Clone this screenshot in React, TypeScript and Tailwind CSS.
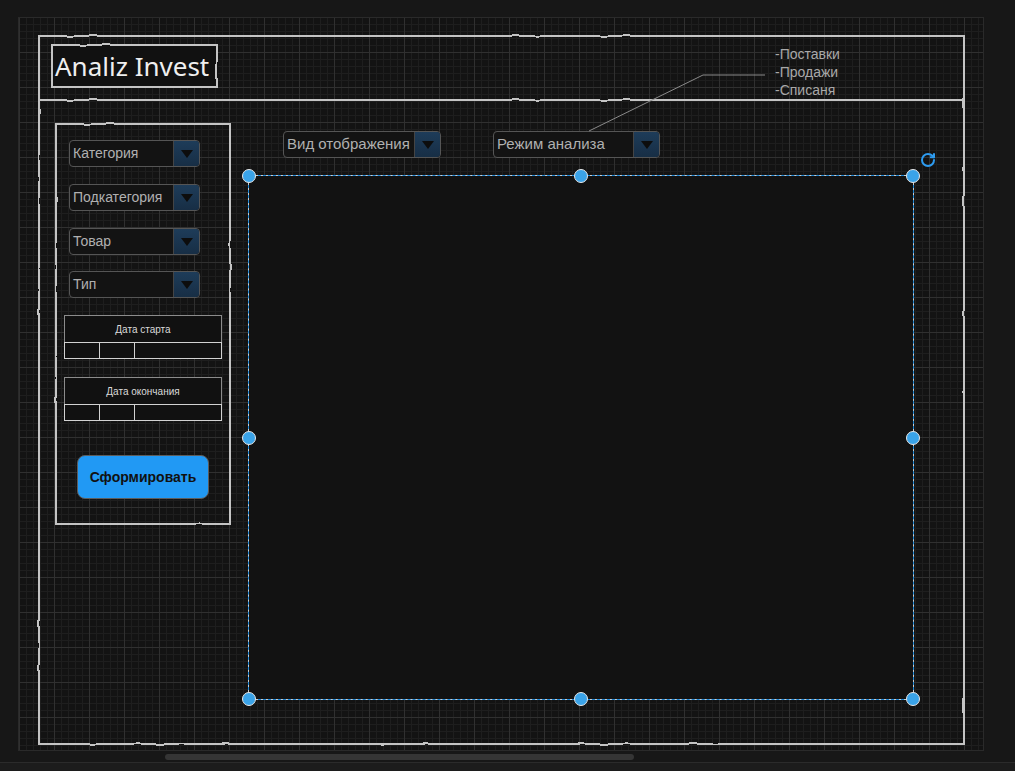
import React from 'react';
import { RotateCw } from 'lucide-react';

const Sketch = ({ className = '' }: { className?: string }) => (
  <div className={`pointer-events-none absolute [filter:url(#rough)] border-[#c4c4c4] ${className}`} />
);

const Select = ({ label, className = '', textSize = 'text-[14px]' }: { label: string; className?: string; textSize?: string }) => (
  <div className={`flex h-[27px] overflow-hidden rounded-[4px] border border-[#555] bg-[#131313] ${className}`}>
    <div className={`flex flex-1 items-center whitespace-nowrap pl-[3px] ${textSize} text-[#b0b0b0]`}>{label}</div>
    <div className="flex w-[26px] items-center justify-center border-l border-[#444] bg-[linear-gradient(#1e3c59,#172e45)]">
      <div className="h-0 w-0 border-x-[6px] border-t-[8px] border-x-transparent border-t-[#0d0d0d]" />
    </div>
  </div>
);

const DateBox = ({ label, className = '' }: { label: string; className?: string }) => (
  <div className={`w-[158px] ${className}`}>
    <div className="flex h-[27px] items-center justify-center border border-b-0 border-[#8c8c8c] bg-[#111] text-[10px] text-[#dadada]">
      {label}
    </div>
    <div className="flex h-[17px] border border-[#d2d2d2] bg-[#111]">
      <div className="w-[35px] border-r border-[#d2d2d2]" />
      <div className="w-[35px] border-r border-[#d2d2d2]" />
      <div className="flex-1" />
    </div>
  </div>
);

const Handle = ({ className }: { className: string }) => (
  <div className={`absolute h-[14px] w-[14px] rounded-full border border-[#e8e8e8] bg-[#3aa3e8] ${className}`} />
);

export default function App() {
  return (
    <div className="flex h-[771px] w-[1015px] flex-col overflow-hidden bg-[#171717] font-['Liberation_Sans',Arial,sans-serif]">
      <svg width="0" height="0" className="absolute">
        <filter id="rough" x="-5%" y="-5%" width="110%" height="110%">
          <feTurbulence type="fractalNoise" baseFrequency="0.045" numOctaves="1" seed="5" />
          <feDisplacementMap in="SourceGraphic" scale="2.5" />
        </filter>
      </svg>

      {/* canvas */}
      <div className="pl-[18px] pt-[17px]">
        <div className="h-[734px] w-[966px] border border-[#2a2a2a] bg-[#131313] bg-[linear-gradient(#303030_1px,transparent_1px),linear-gradient(90deg,#303030_1px,transparent_1px),linear-gradient(#1e1e1e_1px,transparent_1px),linear-gradient(90deg,#1e1e1e_1px,transparent_1px)] pl-[19px] pt-[17px] [background-position:0px_-1px] [background-size:35px_35px,35px_35px,7px_7px,7px_7px]">
          {/* page frame */}
          <div className="relative flex h-[710px] w-[927px] flex-col">
            <Sketch className="inset-0 border-2" />

            {/* header */}
            <div className="relative h-[66px] shrink-0 pl-[13px] pt-[9px]">
              <Sketch className="inset-x-0 bottom-0 h-[2px] border-b-2" />
              <div className="relative flex h-[44px] w-[167px] items-center bg-[#111] pl-[4px] font-['Noto_Sans',sans-serif] text-[26px] text-[#efefef]">
                <Sketch className="inset-0 border-2" />
                Analiz Invest
              </div>
            </div>

            {/* body */}
            <div className="flex pl-[17px] pt-[22px]">
              {/* filters */}
              <div className="relative flex h-[402px] w-[176px] flex-col">
                <Sketch className="inset-0 border-2" />
                <Select label="Категория" className="ml-[14px] mt-[17px] w-[131px]" />
                <Select label="Подкатегория" className="ml-[14px] mt-[17px] w-[131px]" />
                <Select label="Товар" className="ml-[14px] mt-[17px] w-[131px]" />
                <Select label="Тип" className="ml-[14px] mt-[16px] w-[131px]" />
                <DateBox label="Дата старта" className="ml-[9px] mt-[17px]" />
                <DateBox label="Дата окончания" className="ml-[9px] mt-[18px]" />
                <button className="ml-[22px] mt-[34px] flex h-[44px] w-[132px] items-center justify-center rounded-[8px] border border-[#5c5c5c] bg-[#2199f4] text-[14px] font-bold text-[#111]">
                  Сформировать
                </button>
              </div>

              {/* main */}
              <div className="ml-[17px] flex flex-col">
                <div className="mt-[8px] flex pl-[35px]">
                  <Select label="Вид отображения" className="w-[158px]" textSize="text-[15px]" />
                  <Select label="Режим анализа" className="ml-[52px] w-[167px]" textSize="text-[15px]" />
                </div>
                <div className="relative mt-[17px] h-[525px] w-[666px] border border-[#cfcfcf] bg-[#121212]">
                  <div className="pointer-events-none absolute inset-[-1px] border border-dashed border-[#1d87d6]" />
                  <Handle className="left-[-7px] top-[-7px]" />
                  <Handle className="left-1/2 top-[-7px] -translate-x-1/2" />
                  <Handle className="right-[-7px] top-[-7px]" />
                  <Handle className="left-[-7px] top-1/2 -translate-y-1/2" />
                  <Handle className="right-[-7px] top-1/2 -translate-y-1/2" />
                  <Handle className="bottom-[-7px] left-[-7px]" />
                  <Handle className="bottom-[-7px] left-1/2 -translate-x-1/2" />
                  <Handle className="bottom-[-7px] right-[-7px]" />
                  <RotateCw size={16} strokeWidth={3} className="absolute right-[-23px] top-[-24px] text-[#2d9bf0]" />
                </div>
              </div>
            </div>

            {/* annotation */}
            <svg className="pointer-events-none absolute inset-0 h-full w-full">
              <polyline points="727,40 665,40 551,96" fill="none" stroke="#8a8a8a" strokeWidth="1" />
            </svg>
            <div className="absolute left-[737px] top-[10px] text-[14px] leading-[18px] text-[#a9a9a9]">
              <div>-Поставки</div>
              <div>-Продажи</div>
              <div>-Списаня</div>
            </div>
          </div>
        </div>
      </div>

      {/* scrollbar */}
      <div className="h-[11px] shrink-0 pl-[165px] pt-[3px]">
        <div className="h-[6px] w-[469px] rounded-full bg-[#353535]" />
      </div>
      <div className="flex-1 border-t border-[#2b2b2b] bg-[#1c1c1c]" />
    </div>
  );
}
